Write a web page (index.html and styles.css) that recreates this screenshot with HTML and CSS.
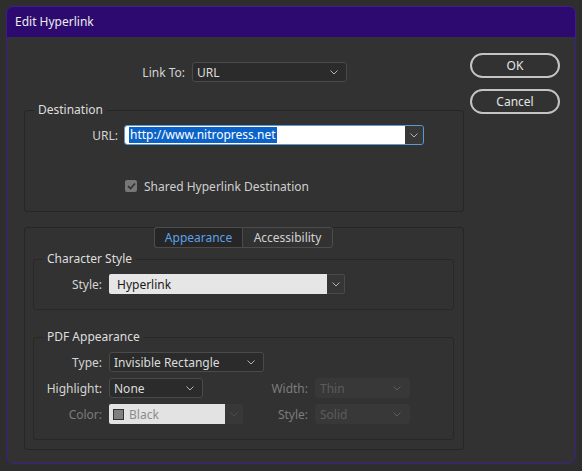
FILE: index.html
```html
<!DOCTYPE html>
<html lang="en">
  <head>
    <meta charset="UTF-8">
    <title>Edit Hyperlink</title>
    <link rel="stylesheet" href="styles.css">
  </head>
  <body>
    <div class="dialog">
      <div class="titlebar">Edit Hyperlink</div>
      <div class="content">
        <div class="main">
          <div class="row link-row">
            <label class="lbl link-lbl">Link To:</label>
            <div class="select link-select">
              <span>URL</span>
              <svg class="chev" width="8" height="5" viewBox="0 0 8 5"><polyline points="0.5,0.5 4,4 7.5,0.5" /></svg>
            </div>
          </div>

          <fieldset class="group dest">
            <legend>Destination</legend>
            <div class="row">
              <label class="lbl url-lbl">URL:</label>
              <div class="combo url-combo">
                <div class="combo-text"><span class="sel">http://www.nitropress.net</span></div>
                <div class="combo-btn">
                  <svg class="chev" width="8" height="5" viewBox="0 0 8 5"><polyline points="0.5,0.5 4,4 7.5,0.5" /></svg>
                </div>
              </div>
            </div>
            <div class="row check-row">
              <span class="checkbox">
                <svg width="9" height="8" viewBox="0 0 9 8"><polyline points="1,4 3.5,6.5 8,1.5" /></svg>
              </span>
              <span>Shared Hyperlink Destination</span>
            </div>
          </fieldset>

          <div class="group tabbed">
            <div class="tabs">
              <div class="tab active">Appearance</div>
              <div class="tab">Accessibility</div>
            </div>

            <fieldset class="group inner char">
              <legend>Character Style</legend>
              <div class="row">
                <label class="lbl short-lbl">Style:</label>
                <div class="combo style-combo light">
                  <div class="combo-text">Hyperlink</div>
                  <div class="combo-btn">
                    <svg class="chev" width="8" height="5" viewBox="0 0 8 5"><polyline points="0.5,0.5 4,4 7.5,0.5" /></svg>
                  </div>
                </div>
              </div>
            </fieldset>

            <fieldset class="group inner pdf">
              <legend>PDF Appearance</legend>
              <div class="pdf-grid">
                <label class="lbl">Type:</label>
                <div class="select type-select">
                  <span>Invisible Rectangle</span>
                  <svg class="chev" width="8" height="5" viewBox="0 0 8 5"><polyline points="0.5,0.5 4,4 7.5,0.5" /></svg>
                </div>
                <span></span>
                <span></span>

                <label class="lbl">Highlight:</label>
                <div class="cell">
                  <div class="select hl-select">
                    <span>None</span>
                    <svg class="chev" width="8" height="5" viewBox="0 0 8 5"><polyline points="0.5,0.5 4,4 7.5,0.5" /></svg>
                  </div>
                </div>
                <label class="lbl off">Width:</label>
                <div class="select disabled">
                  <span>Thin</span>
                  <svg class="chev" width="8" height="5" viewBox="0 0 8 5"><polyline points="0.5,0.5 4,4 7.5,0.5" /></svg>
                </div>

                <label class="lbl off">Color:</label>
                <div class="cell">
                  <div class="combo color-combo">
                    <div class="combo-text"><span class="swatch"></span>Black</div>
                    <div class="combo-btn">
                      <svg class="chev" width="8" height="5" viewBox="0 0 8 5"><polyline points="0.5,0.5 4,4 7.5,0.5" /></svg>
                    </div>
                  </div>
                </div>
                <label class="lbl off">Style:</label>
                <div class="select disabled">
                  <span>Solid</span>
                  <svg class="chev" width="8" height="5" viewBox="0 0 8 5"><polyline points="0.5,0.5 4,4 7.5,0.5" /></svg>
                </div>
              </div>
            </fieldset>
          </div>
        </div>

        <div class="buttons">
          <button class="btn">OK</button>
          <button class="btn">Cancel</button>
        </div>
      </div>
    </div>
  </body>
</html>
```

FILE: styles.css
```css
* {
    box-sizing: border-box;
}
body {
    margin: 0;
    padding: 6px;
    background-color: #2e2e2e;
    font-family: "Noto Sans", "Liberation Sans", sans-serif;
    font-size: 12px;
    color: #d4d4d4;
}
.dialog {
    width: 570px;
    height: 458px;
    border: 1px solid #3c1f8a;
    border-radius: 7px;
    background-color: #323232;
    overflow: hidden;
}
.titlebar {
    height: 30px;
    line-height: 30px;
    padding-left: 8px;
    background-color: #2d0a6f;
    color: #ececec;
}
.content {
    display: flex;
    gap: 6px;
    padding: 16px 0 0 17px;
}
.main {
    width: 440px;
    padding-top: 9px;
}

/* rows and labels */
.row {
    display: flex;
    align-items: center;
    height: 20px;
}
.lbl {
    text-align: right;
    white-space: nowrap;
}
.lbl.off {
    color: #7c7c7c;
}
.link-lbl {
    width: 161px;
    margin-right: 7px;
}
.url-lbl {
    width: 93px;
    margin-right: 6px;
}
.short-lbl {
    width: 68px;
    margin-right: 7px;
}

/* dropdowns */
.chev {
    fill: none;
    stroke: #b4b4b4;
    stroke-width: 1;
}
.select {
    display: flex;
    align-items: center;
    justify-content: space-between;
    height: 20px;
    padding: 0 8px 0 4px;
    background-color: #2b2b2b;
    border: 1px solid #4a4a4a;
    border-radius: 3px;
    color: #dcdcdc;
}
.link-select {
    width: 155px;
}
.type-select {
    grid-column: span 1;
}
.hl-select {
    width: 94px;
}
.select.disabled {
    background-color: #383838;
    border-color: #383838;
    color: #5c5c5c;
}
.select.disabled .chev {
    stroke: #5c5c5c;
}
.combo {
    display: flex;
    height: 20px;
    border-radius: 2px;
    overflow: hidden;
}
.combo-text {
    flex: 1;
    display: flex;
    align-items: center;
    padding-left: 4px;
    background-color: #ffffff;
    color: #1a1a1a;
}
.combo-btn {
    width: 18px;
    display: flex;
    align-items: center;
    justify-content: center;
    background-color: #363636;
    border: 1px solid #4a4a4a;
    border-left: none;
    border-radius: 0 2px 2px 0;
}
.url-combo {
    width: 300px;
    border: 1px solid #5b9bd5;
    border-radius: 3px;
}
.url-combo .combo-btn {
    border: none;
    background-color: #383838;
}
.sel {
    background-color: #0b63c9;
    color: #ffffff;
    line-height: 16px;
    padding: 0 1px;
}
.style-combo {
    width: 236px;
}
.style-combo .combo-text {
    background-color: #e6e6e6;
    padding-left: 8px;
}
.color-combo {
    width: 134px;
}
.color-combo .combo-text {
    background-color: #e3e3e3;
    color: #8c8c8c;
    padding-left: 4px;
}
.color-combo .combo-btn {
    background-color: #383838;
    border-color: #383838;
}
.color-combo .chev {
    stroke: #4e4e4e;
}
.swatch {
    width: 11px;
    height: 11px;
    margin-right: 5px;
    background-color: #808080;
    border: 1px solid #333333;
}

/* checkbox */
.check-row {
    margin-top: 31px;
    padding-left: 100px;
    gap: 7px;
    color: #cfcfcf;
}
.checkbox {
    width: 12px;
    height: 12px;
    border-radius: 2px;
    background-color: #777777;
    display: flex;
    align-items: center;
    justify-content: center;
}
.checkbox svg {
    fill: none;
    stroke: #2e2e2e;
    stroke-width: 1.6;
}

/* group boxes */
.group {
    margin: 0;
    min-width: 0;
    border: 1px solid #262626;
    border-radius: 3px;
}
fieldset.group {
    padding: 7px 0 15px 0;
}
legend {
    margin-left: 9px;
    padding: 0 4px;
    line-height: 16px;
    color: #dedede;
}
.dest {
    margin-top: 20px;
}
.tabbed {
    margin-top: 15px;
    padding: 0 9px 9px 8px;
}
.tabs {
    display: flex;
    justify-content: center;
    margin-top: -1px;
}
.tab {
    height: 21px;
    line-height: 19px;
    text-align: center;
    border: 1px solid #4c4c4c;
    color: #d2d2d2;
}
.tab.active {
    width: 88px;
    background-color: #262626;
    color: #5aa2e8;
    border-radius: 3px 0 0 3px;
    border-right: none;
}
.tab:last-child {
    width: 91px;
    border-radius: 0 3px 3px 0;
}
fieldset.inner {
    border-color: #282828;
}
.char {
    margin-top: 3px;
    padding-bottom: 14px;
}
.pdf {
    margin-top: 19px;
    padding: 8px 0 13px 0;
}
.pdf-grid {
    display: grid;
    grid-template-columns: 68px 155px 37px 95px;
    grid-auto-rows: 20px;
    column-gap: 7px;
    row-gap: 6px;
    align-items: center;
}
.cell {
    display: flex;
}

/* buttons */
.buttons {
    display: flex;
    flex-direction: column;
    gap: 11px;
}
.btn {
    width: 90px;
    height: 25px;
    border: 2px solid #c4c4c4;
    border-radius: 13px;
    background: transparent;
    color: #e4e4e4;
    font-family: inherit;
    font-size: 12px;
}
```
